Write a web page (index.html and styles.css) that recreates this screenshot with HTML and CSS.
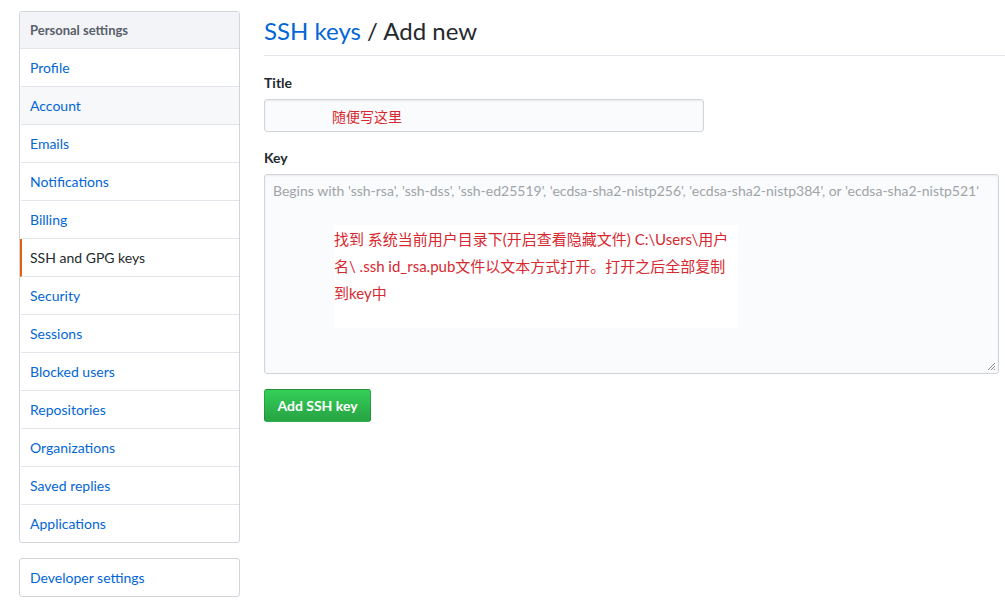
FILE: index.html
```html
<!DOCTYPE html>
<html lang="zh">
<head>
<meta charset="utf-8">
<title>SSH keys / Add new</title>
<link rel="stylesheet" href="styles.css">
</head>
<body>
<div class="page">
  <aside class="sidebar">
    <nav class="menu">
      <div class="menu-heading">Personal settings</div>
      <a class="menu-item">Profile</a>
      <a class="menu-item hover">Account</a>
      <a class="menu-item">Emails</a>
      <a class="menu-item">Notifications</a>
      <a class="menu-item">Billing</a>
      <a class="menu-item selected">SSH and GPG keys</a>
      <a class="menu-item">Security</a>
      <a class="menu-item">Sessions</a>
      <a class="menu-item">Blocked users</a>
      <a class="menu-item">Repositories</a>
      <a class="menu-item">Organizations</a>
      <a class="menu-item">Saved replies</a>
      <a class="menu-item">Applications</a>
    </nav>
    <nav class="menu">
      <a class="menu-item">Developer settings</a>
    </nav>
  </aside>
  <main class="main">
    <h2 class="subhead"><a class="crumb">SSH keys</a> / Add new</h2>
    <div class="form-group">
      <label class="label">Title</label>
      <div class="input title-input"><span class="note">随便写这里</span></div>
    </div>
    <div class="form-group">
      <label class="label">Key</label>
      <div class="input textarea">
        <div class="placeholder">Begins with 'ssh-rsa', 'ssh-dss', 'ssh-ed25519', 'ecdsa-sha2-nistp256', 'ecdsa-sha2-nistp384', or 'ecdsa-sha2-nistp521'</div>
        <div class="note-box">找到 系统当前用户目录下(开启查看隐藏文件) C:\Users\用户名\ .ssh id_rsa.pub文件以文本方式打开。打开之后全部复制到key中</div>
        <svg class="grip" width="9" height="9" viewBox="0 0 9 9"><path d="M8 1 L1 8 M8 4 L4 8 M8 7 L7 8" stroke="#8a8a8a" stroke-width="1" fill="none"/></svg>
      </div>
    </div>
    <button class="btn">Add SSH key</button>
  </main>
</div>
</body>
</html>
```
FILE: styles.css
```css
* { box-sizing: border-box; }
html, body { margin: 0; padding: 0; background: #fff; }
body {
  font-family: "Segoe UI", Lato, "Liberation Sans", "Noto Sans CJK SC", sans-serif;
  font-size: 14px;
  color: #24292e;
}
.page {
  display: flex;
  gap: 24px;
  padding: 11px 0 0 19px;
}
.sidebar {
  width: 221px;
  flex: none;
  display: flex;
  flex-direction: column;
  gap: 15px;
}
.menu {
  border: 1px solid #d1d5da;
  border-radius: 3px;
  overflow: hidden;
}
.menu-heading {
  height: 37px;
  padding: 0 10px;
  display: flex;
  align-items: center;
  font-size: 13px;
  font-weight: 700;
  color: #586069;
  background: #f3f4f7;
  border-bottom: 1px solid #e1e4e8;
}
.menu-item {
  display: flex;
  align-items: center;
  height: 38px;
  padding: 0 10px 0 8px;
  color: #0366d6;
  border-bottom: 1px solid #e1e4e8;
  border-left: 2px solid transparent;
}
.menu-item:last-child { border-bottom: 0; height: 37px; }
.menu-item.hover { background: #f6f8fa; }
.menu-item.selected { color: #24292e; border-left-color: #e36209; }
.main {
  flex: 1;
  min-width: 0;
}
.subhead {
  margin: 0;
  font-size: 24px;
  font-weight: 400;
  line-height: 40px;
  padding-bottom: 4px;
  border-bottom: 1px solid #e1e4e8;
}
.crumb { color: #0366d6; }
.form-group { margin-top: 16px; }
.form-group + .form-group { margin-top: 15px; }
.label {
  display: block;
  font-weight: 700;
  line-height: 22px;
  margin-bottom: 5px;
}
.input {
  background: #fafbfc;
  border: 1px solid #d1d5da;
  border-radius: 3px;
  box-shadow: inset 0 1px 2px rgba(27,31,35,.075);
}
.title-input {
  width: 440px;
  height: 33px;
  padding-left: 67px;
  display: flex;
  align-items: center;
}
.note { color: #d7282f; font-size: 14px; }
.textarea {
  position: relative;
  width: 735px;
  height: 200px;
  padding: 6px 8px;
}
.placeholder {
  color: #a0a4a8;
  font-size: 14px;
  line-height: 20px;
  white-space: nowrap;
}
.note-box {
  margin: 24px 0 0 61px;
  width: 404px;
  height: 103px;
  background: #fff;
  color: #d7282f;
  font-size: 15px;
  line-height: 27px;
  padding: 1px 0 0 0;
}
.grip { position: absolute; right: 2px; bottom: 2px; }
.btn {
  display: block;
  margin-top: 15px;
  height: 33px;
  width: 107px;
  border: 1px solid rgba(27,31,35,.2);
  border-radius: 3px;
  background: linear-gradient(#34d058, #28a745 90%);
  color: #fff;
  font-family: inherit;
  font-size: 14px;
  font-weight: 700;
  padding: 0;
}
```
